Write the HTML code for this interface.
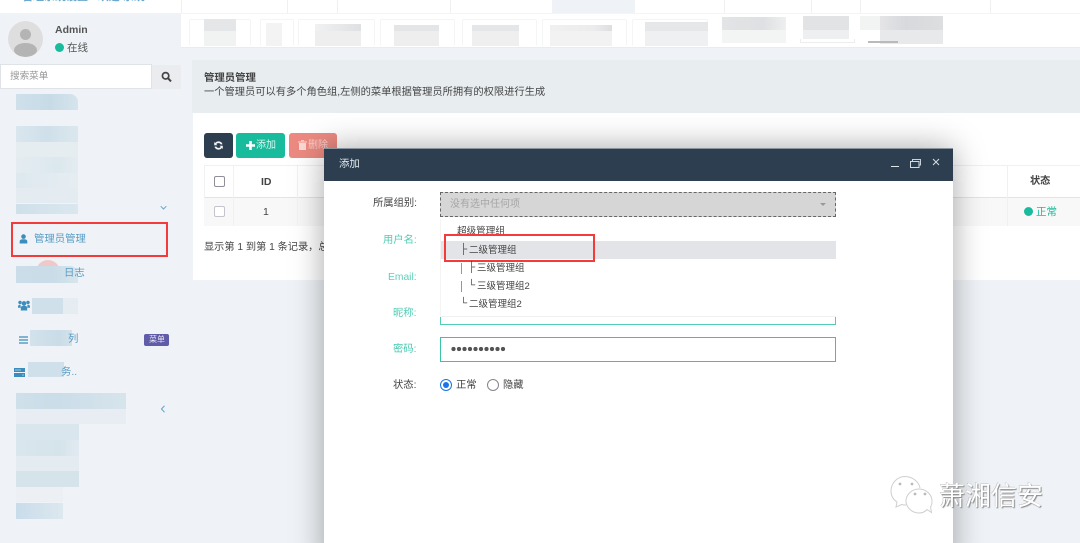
<!DOCTYPE html>
<html lang="zh"><head><meta charset="utf-8"><title>管理员管理</title>
<style>
*{box-sizing:border-box}
html,body{margin:0;padding:0;width:1080px;height:543px;overflow:hidden;background:#eff3f7}
body{position:relative;font-family:"Liberation Sans","Noto Sans CJK SC",sans-serif;font-size:10px;color:#444;filter:blur(.35px)}
.a{position:absolute}
.t{position:absolute;white-space:nowrap;line-height:14px}
.tb{position:absolute;top:19px;height:27px;border:1px solid #f4f5f5;border-bottom:none;border-radius:2px}
</style></head><body>

<!-- top strip -->
<div class="a" style="left:0;top:0;width:1080px;height:13px;background:#fff"></div>
<div class="t" style="left:22px;top:-10px;color:#3c8dbc;font-size:11px;font-weight:bold;opacity:.75">管理系统设置 · 欢迎 系统</div>
<div class="a" style="left:181px;top:0;width:1px;height:13px;background:#eef0f2"></div>
<div class="a" style="left:287px;top:0;width:1px;height:13px;background:#eef0f2"></div>
<div class="a" style="left:337px;top:0;width:1px;height:13px;background:#eef0f2"></div>
<div class="a" style="left:450px;top:0;width:1px;height:13px;background:#eef0f2"></div>
<div class="a" style="left:552px;top:0;width:83px;height:13px;background:#eff3f7"></div>
<div class="a" style="left:724px;top:0;width:1px;height:13px;background:#eef0f2"></div>
<div class="a" style="left:811px;top:0;width:1px;height:13px;background:#eef0f2"></div>
<div class="a" style="left:860px;top:0;width:1px;height:13px;background:#eef0f2"></div>
<div class="a" style="left:990px;top:0;width:1px;height:13px;background:#eef0f2"></div>

<!-- tab bar -->
<div class="a" style="left:181px;top:13px;width:899px;height:35px;background:#fff;border-top:1px solid #f3f4f5;border-bottom:1px solid #e8ecef"></div>
<div class="tb" style="left:189px;width:62px"></div>
<div class="tb" style="left:260px;width:34px"></div>
<div class="tb" style="left:298px;width:77px"></div>
<div class="tb" style="left:380px;width:75px"></div>
<div class="tb" style="left:462px;width:75px"></div>
<div class="tb" style="left:542px;width:85px"></div>
<div class="tb" style="left:632px;width:76px"></div>
<div class="a" style="left:204px;top:19px;width:32px;height:12px;background:#e5e6e8"></div>
<div class="a" style="left:204px;top:31px;width:32px;height:15px;background:#f1f2f2"></div>
<div class="a" style="left:266px;top:23px;width:16px;height:23px;background:#f3f3f3"></div>
<div class="a" style="left:315px;top:24px;width:46px;height:7px;background:linear-gradient(90deg,#f0f1f1,#e8e9ea 50%,#dfe0e2)"></div>
<div class="a" style="left:315px;top:31px;width:46px;height:15px;background:#eeeeef"></div>
<div class="a" style="left:394px;top:25px;width:45px;height:6px;background:#e4e5e6"></div>
<div class="a" style="left:394px;top:31px;width:45px;height:15px;background:#eeeeef"></div>
<div class="a" style="left:472px;top:25px;width:47px;height:6px;background:#e5e6e7"></div>
<div class="a" style="left:472px;top:31px;width:47px;height:15px;background:#efefef"></div>
<div class="a" style="left:550px;top:25px;width:62px;height:6px;background:linear-gradient(90deg,#f0f0f1,#ececed 70%,#dddee0)"></div>
<div class="a" style="left:550px;top:31px;width:62px;height:15px;background:#f2f2f2"></div>
<div class="a" style="left:645px;top:22px;width:63px;height:9px;background:#e6e7e9"></div>
<div class="a" style="left:645px;top:31px;width:63px;height:15px;background:#eff0f1"></div>
<div class="a" style="left:722px;top:17px;width:64px;height:13px;background:linear-gradient(90deg,#e3e4e6,#dfe0e3 65%,#eeeff0)"></div>
<div class="a" style="left:722px;top:30px;width:64px;height:13px;background:#f3f4f4"></div>
<div class="a" style="left:803px;top:16px;width:46px;height:14px;background:#e2e3e5"></div>
<div class="a" style="left:803px;top:30px;width:46px;height:9px;background:#eeeff0"></div>
<div class="a" style="left:800px;top:39px;width:55px;height:4px;border:1px solid #eceded;border-top:none"></div>
<div class="a" style="left:860px;top:16px;width:20px;height:14px;background:#f2f3f3"></div>
<div class="a" style="left:880px;top:16px;width:63px;height:14px;background:linear-gradient(90deg,#e4e5e7,#d8d9dc 40%,#dddee0)"></div>
<div class="a" style="left:880px;top:30px;width:63px;height:14px;background:#e8e9ea"></div>
<div class="a" style="left:868px;top:41px;width:30px;height:2px;background:#b9babc"></div>

<!-- user panel -->
<div class="a" style="left:8px;top:21px;width:35px;height:36px;border-radius:50%;background:#dedede;overflow:hidden">
 <div class="a" style="left:12px;top:8px;width:11px;height:11px;border-radius:50%;background:#b4b4b4"></div>
 <div class="a" style="left:6px;top:22px;width:23px;height:14px;border-radius:50%;background:#b4b4b4"></div>
</div>
<div class="t" style="left:55px;top:23px;font-size:10.5px;font-weight:bold;color:#555">Admin</div>
<div class="a" style="left:55px;top:43px;width:9px;height:9px;border-radius:50%;background:#18bc9c"></div>
<div class="t" style="left:67px;top:41px;font-size:10.5px;color:#555">在线</div>

<!-- search -->
<div class="a" style="left:0;top:64px;width:152px;height:25px;background:#fff;border:1px solid #dfe3e8"></div>
<div class="t" style="left:10px;top:70px;font-size:9.6px;color:#999">搜索菜单</div>
<div class="a" style="left:152px;top:65px;width:29px;height:24px;background:#ebecf0"></div>
<svg class="a" style="left:161px;top:71px" width="11" height="12" viewBox="0 0 11 12"><circle cx="4.6" cy="4.8" r="3.2" fill="none" stroke="#444" stroke-width="1.7"/><path d="M7 7.2l3 3.2" stroke="#444" stroke-width="2" fill="none"/></svg>

<!-- sidebar mosaics -->
<div class="a" style="left:16px;top:94px;width:62px;height:16px;background:linear-gradient(90deg,#cfe0ea,#c7dbe7 55%,#d6e4ec);border-top-right-radius:8px"></div>
<div class="a" style="left:16px;top:126px;width:62px;height:16px;background:linear-gradient(90deg,#dae6ee,#cfe0ea 50%,#dbe7ee)"></div>
<div class="a" style="left:16px;top:142px;width:62px;height:15px;background:#e6edf1"></div>
<div class="a" style="left:16px;top:157px;width:62px;height:16px;background:linear-gradient(90deg,#e4ecf1,#dce8ee 70%,#e4ecf1)"></div>
<div class="a" style="left:16px;top:173px;width:62px;height:15px;background:linear-gradient(90deg,#dde8ef,#e6edf2)"></div>
<div class="a" style="left:16px;top:188px;width:62px;height:15px;background:#e4ecf1"></div>
<div class="a" style="left:16px;top:204px;width:62px;height:10px;background:linear-gradient(90deg,#cfe0ea,#dbe7ee)"></div>
<svg class="a" style="left:160px;top:205px" width="7" height="6" viewBox="0 0 7 6"><path d="M.7 1.2L3.5 4l2.8-2.8" fill="none" stroke="#6aa7c9" stroke-width="1"/></svg>

<!-- selected menu -->
<div class="a" style="left:11px;top:222px;width:157px;height:35px;border:2px solid #f33b3b"></div>
<svg class="a" style="left:19px;top:234px" width="9" height="10" viewBox="0 0 9 10"><circle cx="4.5" cy="2.6" r="2.3" fill="#3c8dbc"/><path d="M.7 9.5V7.4C.7 6 2 5.3 4.5 5.3S8.3 6 8.3 7.4V9.5z" fill="#3c8dbc"/></svg>
<div class="t" style="left:34px;top:233px;font-size:10.4px;color:#5a9cc4">管理员管理</div>

<!-- log item -->
<div class="a" style="left:36px;top:260px;width:24px;height:14px;border-radius:12px 12px 0 0;background:#f0c8c8"></div>
<div class="a" style="left:16px;top:266px;width:62px;height:17px;background:linear-gradient(90deg,#cbdde8,#c9dce7 60%,#d8e5ec);border-top-right-radius:8px"></div>
<div class="t" style="left:64px;top:267px;font-size:10.4px;color:#5a9cc4">日志</div>

<!-- group item -->
<svg class="a" style="left:18px;top:300px" width="12" height="11" viewBox="0 0 12 11"><circle cx="6" cy="3.4" r="2.3" fill="#3c8dbc"/><circle cx="2" cy="2.4" r="1.7" fill="#3c8dbc"/><circle cx="10" cy="2.4" r="1.7" fill="#3c8dbc"/><path d="M0 7.3C0 5.2 1 4.6 2.5 4.6L2.7 7.8H0zM12 7.3C12 5.2 11 4.6 9.5 4.6L9.3 7.8H12zM2.8 10.5V7.8C2.8 6.3 4 5.8 6 5.8S9.2 6.3 9.2 7.8V10.5z" fill="#3c8dbc"/></svg>
<div class="a" style="left:32px;top:298px;width:32px;height:16px;background:#cfe0ea"></div>
<div class="a" style="left:63px;top:298px;width:15px;height:16px;background:#e6edf2"></div>

<!-- menu item -->
<svg class="a" style="left:19px;top:336px" width="9" height="8" viewBox="0 0 9 8"><path d="M0 1h9M0 4h9M0 7h9" stroke="#3c8dbc" stroke-width="1.3"/></svg>
<div class="a" style="left:30px;top:330px;width:42px;height:16px;background:linear-gradient(90deg,#d3e2eb,#c9dce7 70%,#d3e2eb)"></div>
<div class="t" style="left:68px;top:333px;font-size:10.4px;color:#5a9cc4">列</div>
<div class="a" style="left:144px;top:334px;width:25px;height:12px;border-radius:2px;background:#605ca8"></div>
<div class="t" style="left:149px;top:333px;font-size:8px;color:#e8e6f5">菜单</div>

<!-- server item -->
<svg class="a" style="left:14px;top:368px" width="11" height="9" viewBox="0 0 11 9"><rect width="11" height="4" fill="#3c8dbc"/><rect y="5" width="11" height="4" fill="#3c8dbc"/><rect x="1" y="1.5" width="6" height="1" fill="#9cc6dd"/><rect x="8" y="6.5" width="2" height="1" fill="#9cc6dd"/></svg>
<div class="a" style="left:28px;top:362px;width:36px;height:15px;background:#cfe0ea"></div>
<div class="t" style="left:61px;top:366px;font-size:10.4px;color:#5a9cc4">务..</div>

<!-- lower mosaics -->
<div class="a" style="left:16px;top:393px;width:110px;height:16px;background:linear-gradient(90deg,#cfe0ea,#cadde8 35%,#d7e4ec)"></div>
<div class="a" style="left:16px;top:409px;width:110px;height:15px;background:#e7edf2"></div>
<div class="a" style="left:16px;top:424px;width:63px;height:16px;background:#dae6ee"></div>
<div class="a" style="left:16px;top:440px;width:63px;height:16px;background:linear-gradient(90deg,#dae6ee,#d5e3eb 70%,#e2eaf1)"></div>
<div class="a" style="left:16px;top:456px;width:63px;height:15px;background:#e5ecf1"></div>
<div class="a" style="left:16px;top:471px;width:63px;height:16px;background:#d5e3eb"></div>
<div class="a" style="left:16px;top:487px;width:47px;height:15px;background:#ecf0f4"></div>
<div class="a" style="left:16px;top:503px;width:47px;height:16px;background:linear-gradient(90deg,#c9dcea,#dde8ef)"></div>
<svg class="a" style="left:160px;top:405px" width="6" height="8" viewBox="0 0 6 8"><path d="M4.5.8L1.5 4l3 3.2" fill="none" stroke="#6aa7c9" stroke-width="1.1"/></svg>

<!-- content header -->
<div class="a" style="left:192px;top:60px;width:888px;height:53px;background:#e8edf0"></div>
<div class="t" style="left:204px;top:72px;font-size:10.4px;font-weight:bold;color:#444">管理员管理</div>
<div class="t" style="left:204px;top:86px;font-size:10.25px;color:#444">一个管理员可以有多个角色组,左侧的菜单根据管理员所拥有的权限进行生成</div>

<!-- content panel -->
<div class="a" style="left:193px;top:113px;width:887px;height:167px;background:#fff"></div>
<div class="a" style="left:204px;top:133px;width:29px;height:25px;border-radius:3px;background:#2c3e50"></div>
<svg class="a" style="left:213px;top:140px" width="11" height="11" viewBox="0 0 11 11"><path d="M9.5 4.2A4.2 4.2 0 0 0 2.2 3L1.2 2v3.3h3.3L3.3 4.1a2.700 2.700 0 0 1 4.500.4zM1.500 6.800A4.200 4.200 0 0 0 8.800 8l1 1V5.700H6.500l1.200 1.200a2.700 2.700 0 0 1-4.500-.4z" fill="#f2f4f6"/></svg>
<div class="a" style="left:236px;top:133px;width:49px;height:25px;border-radius:3px;background:#18bc9c"></div>
<svg class="a" style="left:246px;top:141px" width="9" height="9" viewBox="0 0 9 9"><path d="M3.2 0h2.600v3.200H9v2.600H5.800V9H3.200V5.800H0V3.200h3.200z" fill="#fff"/></svg>
<div class="t" style="left:256px;top:139px;font-size:10px;color:#d8f5ef">添加</div>
<div class="a" style="left:289px;top:133px;width:48px;height:25px;border-radius:3px;background:#ec8a81"></div>
<svg class="a" style="left:298px;top:140px" width="9" height="10" viewBox="0 0 9 10"><path d="M0 1.500h9v1H0zM3 .3h3v1H3zM1 3h7v7H1z" fill="#f9d9d6"/></svg>
<div class="t" style="left:308px;top:139px;font-size:10px;color:#f7cfcb">删除</div>

<!-- table -->
<div class="a" style="left:204px;top:165px;width:876px;height:33px;border-top:1px solid #f0f0f0;border-bottom:1px solid #e2e4e6;border-left:1px solid #f2f2f2"></div>
<div class="a" style="left:204px;top:198px;width:876px;height:28px;background:#f8f8f8"></div>
<div class="a" style="left:233px;top:166px;width:1px;height:60px;background:#f1f1f1"></div>
<div class="a" style="left:297px;top:166px;width:1px;height:60px;background:#f1f1f1"></div>
<div class="a" style="left:1007px;top:166px;width:1px;height:60px;background:#f0f0f0"></div>
<div class="a" style="left:214px;top:176px;width:11px;height:11px;border:1.5px solid #8f8f9a;border-radius:2px;background:#fff"></div>
<div class="a" style="left:214px;top:206px;width:11px;height:11px;border:1.5px solid #c4c4cc;border-radius:2px;background:#fff"></div>
<div class="t" style="left:261px;top:175px;font-size:10.5px;font-weight:bold;color:#444">ID</div>
<div class="t" style="left:263px;top:205px;font-size:10.5px;color:#444">1</div>
<div class="t" style="left:1030px;top:175px;font-size:10.2px;font-weight:bold;color:#444">状态</div>
<div class="a" style="left:1024px;top:207px;width:9px;height:9px;border-radius:50%;background:#18bc9c"></div>
<div class="t" style="left:1036px;top:205px;font-size:10.5px;color:#18bc9c">正常</div>
<div class="t" style="left:204px;top:241px;font-size:10.2px;color:#444">显示第 1 到第 1 条记录，总共 1 条记录</div>

<!-- modal -->
<div class="a" style="left:324px;top:148px;width:629px;height:420px;background:#fff;box-shadow:0 0 30px rgba(0,0,0,.35)"></div>
<div class="a" style="left:324px;top:148px;width:629px;height:33px;background:#2c3e50;border-top:1px solid #8a949e"></div>
<div class="t" style="left:339px;top:158px;font-size:10.4px;color:#e8ecef">添加</div>
<div class="a" style="left:891px;top:166px;width:8px;height:1px;background:#dfe4e8"></div>
<svg class="a" style="left:910px;top:159px" width="11" height="9" viewBox="0 0 11 9"><path d="M2.5 2V.5h8v5.500H9" fill="none" stroke="#c8d0d8"/><rect x=".5" y="2.5" width="8.500" height="6" fill="none" stroke="#d5dbe0"/></svg>
<svg class="a" style="left:932px;top:158px" width="8" height="8" viewBox="0 0 8 8"><path d="M1 1l6 6M7 1L1 7" stroke="#d8dde2" stroke-width="1"/></svg>

<!-- form -->
<div class="t" style="left:373px;top:197px;font-size:10.3px;color:#444">所属组别:</div>
<div class="a" style="left:440px;top:192px;width:396px;height:25px;background:#d6d6d6;border:1px dashed #666"></div>
<div class="t" style="left:450px;top:198px;font-size:10px;color:#a6a6a6">没有选中任何项</div>
<div class="a" style="left:820px;top:203px;border-left:3px solid transparent;border-right:3px solid transparent;border-top:3px solid #999"></div>

<div class="t" style="left:383px;top:234px;font-size:10.3px;color:#18bc9c;opacity:.75">用户名:</div>
<div class="t" style="left:388px;top:271px;font-size:10.3px;color:#18bc9c;opacity:.7">Email:</div>
<div class="t" style="left:393px;top:307px;font-size:10.3px;color:#18bc9c;opacity:.75">昵称:</div>
<div class="a" style="left:440px;top:300px;width:396px;height:25px;border:1px solid #18bc9c;opacity:.75"></div>

<!-- dropdown -->
<div class="a" style="left:440px;top:219px;width:396px;height:98px;background:#fff;border-bottom:1px solid #f0f0f0;border-left:1px solid #f4f4f4"></div>
<div class="a" style="left:441px;top:241px;width:395px;height:18px;background:#e3e4e8"></div>
<div class="t" style="left:457px;top:225px;font-size:9.6px;color:#444">超级管理组</div>
<div class="t" style="left:460px;top:243px;font-size:10px;color:#444">├</div>
<div class="t" style="left:469px;top:244px;font-size:9.5px;color:#444">二级管理组</div>
<div class="a" style="left:444px;top:234px;width:151px;height:28px;border:2px solid #f33b3b"></div>
<div class="a" style="left:461px;top:263px;width:1px;height:11px;background:#b8915e"></div>
<div class="t" style="left:468px;top:261px;font-size:10px;color:#444">├</div>
<div class="t" style="left:477px;top:262px;font-size:9.5px;color:#444">三级管理组</div>
<div class="a" style="left:461px;top:281px;width:1px;height:11px;background:#b8915e"></div>
<div class="t" style="left:468px;top:279px;font-size:10px;color:#444">└</div>
<div class="t" style="left:477px;top:280px;font-size:9.5px;color:#444">三级管理组2</div>
<div class="t" style="left:460px;top:297px;font-size:10px;color:#444">└</div>
<div class="t" style="left:469px;top:298px;font-size:9.5px;color:#444">二级管理组2</div>

<div class="t" style="left:393px;top:343px;font-size:10.3px;color:#18bc9c;opacity:.8">密码:</div>
<div class="a" style="left:440px;top:337px;width:396px;height:25px;border:1px solid #3bc3a8"></div>
<div class="a" style="left:451px;top:346px;width:55px;height:6px;background:radial-gradient(circle at 2.5px 3px,#555 2px,transparent 2.3px) 0 0/5.5px 6px repeat-x"></div>

<div class="t" style="left:393px;top:379px;font-size:10.3px;color:#444">状态:</div>
<div class="a" style="left:440px;top:379px;width:12px;height:12px;border-radius:50%;border:1.5px solid #1a73e8;background:#fff"></div>
<div class="a" style="left:443px;top:382px;width:6px;height:6px;border-radius:50%;background:#1a73e8"></div>
<div class="t" style="left:456px;top:379px;font-size:10.3px;color:#444">正常</div>
<div class="a" style="left:487px;top:379px;width:12px;height:12px;border-radius:50%;border:1.5px solid #85858f;background:#fff"></div>
<div class="t" style="left:503px;top:379px;font-size:10.3px;color:#444">隐藏</div>

<!-- watermark -->
<svg class="a" style="left:890px;top:474px" width="48" height="42" viewBox="0 0 48 42"><path d="M16 31c-1.500 0-3 0-4.500-.5L6 33l1-5C3 25.500 1 22 1 17 1 9 7.500 2.500 15 2.500S29 8 30 14" fill="#fff" stroke="#cfcfcf" stroke-width="1"/><path d="M37 35.500l4.500 3-1-5.500c1.500-2 1.500-4 1.500-6 0-6-5.500-12-13-12s-13 6-13 12 5.500 12 13 12c3 0 5.500-.5 8-3.500z" fill="#fff" stroke="#cfcfcf" stroke-width="1"/><circle cx="10" cy="10" r="1.400" fill="#bbb"/><circle cx="22" cy="10" r="1.400" fill="#bbb"/><circle cx="25" cy="20" r="1.400" fill="#bbb"/><circle cx="35" cy="20" r="1.400" fill="#bbb"/></svg>
<div class="t" style="left:939px;top:481px;font-size:26px;line-height:30px;color:#fff;text-shadow:1px 1px 1px #888,-.5px -.5px 0 #bbb">萧湘信安</div>

</body></html>
